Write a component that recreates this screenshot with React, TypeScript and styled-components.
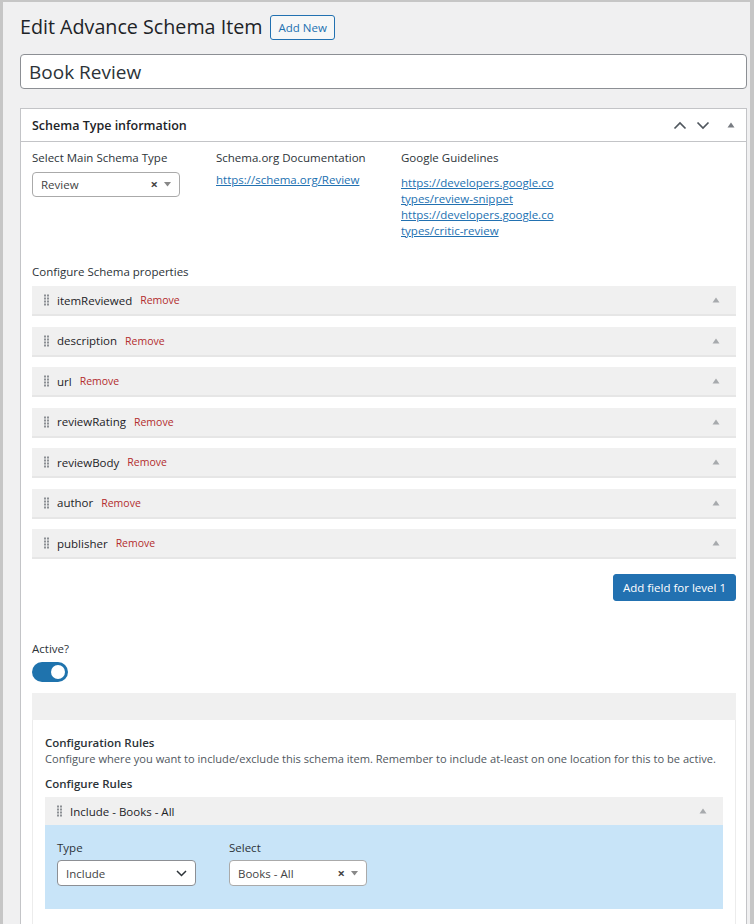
import React from 'react';
import styled, { createGlobalStyle } from 'styled-components';

const GlobalStyle = createGlobalStyle`
    html, body {
        margin: 0;
        padding: 0;
        background: #f0f0f1;
    }
    body {
        font-family: 'Open Sans', 'Noto Sans', Arial, sans-serif;
        color: #1d2327;
    }
    * {
        box-sizing: border-box;
    }
`;

const PROPERTIES = ['itemReviewed', 'description', 'url', 'reviewRating', 'reviewBody', 'author', 'publisher'];

const GOOGLE_LINKS = [
    ['https://developers.google.co', 'types/review-snippet'],
    ['https://developers.google.co', 'types/critic-review'],
];

const DragHandle: React.FC = () => (
    <svg width="5" height="12" viewBox="0 0 5 12">
        {[0, 1, 2, 3].map((row) =>
            [0, 1].map((col) => (
                <rect key={`${row}-${col}`} x={col * 3} y={row * 3 + 0.5} width="2" height="2" fill="#8c8f94" />
            ))
        )}
    </svg>
);

const Triangle: React.FC<{ color?: string; size?: number }> = ({ color = '#a7aaad', size = 8 }) => (
    <svg width={size} height={size * 0.75} viewBox="0 0 8 6">
        <path d="M4 0.5 L7.5 5.5 L0.5 5.5 Z" fill={color} />
    </svg>
);

const Chevron: React.FC<{ down?: boolean }> = ({ down }) => (
    <svg width="14" height="9" viewBox="0 0 14 9">
        <path
            d={down ? 'M1.5 1.5 L7 7 L12.5 1.5' : 'M1.5 7.5 L7 2 L12.5 7.5'}
            fill="none"
            stroke="#50575e"
            strokeWidth="1.7"
        />
    </svg>
);

const SelectArrows: React.FC = () => (
    <ClearArrows>
        <span>×</span>
        <svg width="7" height="5" viewBox="0 0 7 5">
            <path d="M0 0 L7 0 L3.5 4.5 Z" fill="#888" />
        </svg>
    </ClearArrows>
);

const App: React.FC = () => {
    return (
        <>
            <GlobalStyle />
            <Frame>
                <HeadingRow>
                    <Title>Edit Advance Schema Item</Title>
                    <AddNewButton>Add New</AddNewButton>
                </HeadingRow>
                <TitleInput defaultValue="Book Review" />
                <Panel>
                    <PanelHeader>
                        <PanelTitle>Schema Type information</PanelTitle>
                        <HeaderControls>
                            <Chevron />
                            <Chevron down />
                            <TriangleWrap>
                                <Triangle color="#787c82" size={8} />
                            </TriangleWrap>
                        </HeaderControls>
                    </PanelHeader>
                    <PanelBody>
                        <TopColumns>
                            <Column>
                                <FieldLabel>Select Main Schema Type</FieldLabel>
                                <FakeSelect width={148}>
                                    <span>Review</span>
                                    <SelectArrows />
                                </FakeSelect>
                            </Column>
                            <Column>
                                <FieldLabel>Schema.org Documentation</FieldLabel>
                                <DocLink>https://schema.org/Review</DocLink>
                            </Column>
                            <Column>
                                <FieldLabel>Google Guidelines</FieldLabel>
                                <GoogleLinks>
                                    {GOOGLE_LINKS.map(([first, second], i) => (
                                        <GoogleLink key={i}>
                                            {first}
                                            <br />
                                            {second}
                                        </GoogleLink>
                                    ))}
                                </GoogleLinks>
                            </Column>
                        </TopColumns>

                        <SectionLabel>Configure Schema properties</SectionLabel>
                        <PropertyList>
                            {PROPERTIES.map((name) => (
                                <PropertyRow key={name}>
                                    <DragHandle />
                                    <PropertyName>{name}</PropertyName>
                                    <RemoveLink>Remove</RemoveLink>
                                    <RowToggle>
                                        <Triangle />
                                    </RowToggle>
                                </PropertyRow>
                            ))}
                        </PropertyList>

                        <ButtonRow>
                            <PrimaryButton>Add field for level 1</PrimaryButton>
                        </ButtonRow>

                        <ActiveLabel>Active?</ActiveLabel>
                        <Toggle>
                            <Knob />
                        </Toggle>

                        <GrayBar />

                        <ConfigBox>
                            <ConfigTitle>Configuration Rules</ConfigTitle>
                            <ConfigDescription>
                                Configure where you want to include/exclude this schema item. Remember to include
                                at-least on one location for this to be active.
                            </ConfigDescription>
                            <ConfigTitle margin="9px 0 5px 0">Configure Rules</ConfigTitle>
                            <RuleHeader>
                                <DragHandle />
                                <RuleName>Include - Books - All</RuleName>
                                <RowToggle>
                                    <Triangle />
                                </RowToggle>
                            </RuleHeader>
                            <RuleBody>
                                <RuleField>
                                    <RuleLabel>Type</RuleLabel>
                                    <FakeSelect width={139} height={26} bordered>
                                        <span>Include</span>
                                        <svg width="11" height="7" viewBox="0 0 11 7">
                                            <path
                                                d="M1 1 L5.5 5.5 L10 1"
                                                fill="none"
                                                stroke="#2c3338"
                                                strokeWidth="1.5"
                                            />
                                        </svg>
                                    </FakeSelect>
                                </RuleField>
                                <RuleField>
                                    <RuleLabel>Select</RuleLabel>
                                    <FakeSelect width={138} height={26}>
                                        <span>Books - All</span>
                                        <SelectArrows />
                                    </FakeSelect>
                                </RuleField>
                            </RuleBody>
                        </ConfigBox>
                    </PanelBody>
                </Panel>
            </Frame>
        </>
    );
};

const Frame = styled.div`
    min-height: 924px;
    border-top: 2px solid #c6c6c6;
    border-left: 3px solid #c6c6c6;
    border-right: 4px solid #c6c6c6;
    border-bottom: 3px solid #c6c6c6;
    padding: 11px 3px 0 17px;
    display: flex;
    flex-direction: column;
`;

const HeadingRow = styled.div`
    display: flex;
    align-items: center;
    gap: 8px;
    height: 28px;
`;

const Title = styled.h1`
    margin: 0;
    font-size: 19.7px;
    font-weight: 400;
    line-height: 28px;
    color: #1d2327;
`;

const AddNewButton = styled.button`
    height: 25px;
    padding: 0 7px;
    border: 1px solid #2271b1;
    border-radius: 3px;
    background: #f6f7f7;
    color: #2271b1;
    font-family: inherit;
    font-size: 11.5px;
    line-height: 23px;
    margin-top: 1px;
`;

const TitleInput = styled.input`
    margin-top: 13px;
    width: 100%;
    height: 35px;
    border: 1px solid #8c8f94;
    border-radius: 4px;
    padding: 0 8px;
    font-family: inherit;
    font-size: 19px;
    color: #2c3338;
    background: #fff;
    outline: none;
`;

const Panel = styled.div`
    margin-top: 19px;
    flex: 1;
    background: #fff;
    border: 1px solid #c3c4c7;
    border-bottom: none;
`;

const PanelHeader = styled.div`
    height: 33px;
    border-bottom: 1px solid #c3c4c7;
    display: flex;
    align-items: center;
    justify-content: space-between;
    padding: 0 11px 0 11px;
`;

const PanelTitle = styled.h2`
    margin: 0;
    font-size: 12.5px;
    font-weight: 600;
    color: #1d2327;
`;

const HeaderControls = styled.div`
    display: flex;
    align-items: center;
    gap: 9px;
`;

const TriangleWrap = styled.span`
    display: flex;
    margin-left: 8px;
`;

const PanelBody = styled.div`
    padding: 8px 10px 0 11px;
`;

const TopColumns = styled.div`
    display: grid;
    grid-template-columns: 184px 185px 1fr;
`;

const Column = styled.div`
    display: flex;
    flex-direction: column;
`;

const FieldLabel = styled.div`
    font-size: 11.5px;
    line-height: 16px;
    color: #2c3338;
    margin-bottom: 6px;
    font-weight: 500;
`;

const FakeSelect = styled.div<{ width: number; height?: number; bordered?: boolean }>`
    width: ${(props) => props.width}px;
    height: ${(props) => props.height ?? 25}px;
    border: 1px solid ${(props) => (props.bordered ? '#8c8f94' : '#aaa')};
    border-radius: 4px;
    background: #fff;
    display: flex;
    align-items: center;
    justify-content: space-between;
    padding: 0 8px 0 8px;
    font-size: 11.5px;
    color: #444;
`;

const ClearArrows = styled.span`
    display: flex;
    align-items: center;
    gap: 6px;
    font-size: 13px;
    font-weight: 700;
    color: #444;
    line-height: 1;
`;

const DocLink = styled.a`
    font-size: 11.5px;
    line-height: 16px;
    color: #2271b1;
    text-decoration: underline;
`;

const GoogleLinks = styled.div`
    display: flex;
    flex-direction: column;
    margin-top: 3px;
`;

const GoogleLink = styled.a`
    font-size: 11.5px;
    line-height: 16px;
    color: #2271b1;
    text-decoration: underline;
`;

const SectionLabel = styled.div`
    margin-top: 25px;
    font-size: 11.5px;
    line-height: 16px;
    color: #2c3338;
    font-weight: 500;
`;

const PropertyList = styled.div`
    margin-top: 6px;
    display: flex;
    flex-direction: column;
    gap: 10.5px;
`;

const PropertyRow = styled.div`
    height: 30px;
    background: #f0f0f0;
    border-bottom: 2px solid #e6e6e6;
    display: flex;
    align-items: center;
    padding: 0 16px 0 12px;
`;

const PropertyName = styled.span`
    margin-left: 8px;
    font-size: 11.5px;
    color: #1d2327;
`;

const RemoveLink = styled.a`
    margin-left: 8px;
    font-size: 10.5px;
    color: #b32d2e;
`;

const RowToggle = styled.span`
    margin-left: auto;
    display: flex;
`;

const ButtonRow = styled.div`
    display: flex;
    justify-content: flex-end;
    margin-top: 15px;
`;

const PrimaryButton = styled.button`
    height: 27px;
    padding: 0 9px;
    background: #2271b1;
    color: #fff;
    border: 1px solid #2271b1;
    border-radius: 3px;
    font-family: inherit;
    font-size: 11.5px;
`;

const ActiveLabel = styled.div`
    margin-top: 40px;
    font-size: 11.5px;
    line-height: 16px;
    color: #2c3338;
`;

const Toggle = styled.div`
    margin-top: 5px;
    width: 36px;
    height: 20px;
    border-radius: 10px;
    background: #1f73ad;
    position: relative;
`;

const Knob = styled.span`
    position: absolute;
    top: 3px;
    right: 3px;
    width: 14px;
    height: 14px;
    border-radius: 50%;
    background: #fff;
`;

const GrayBar = styled.div`
    margin-top: 11px;
    height: 27px;
    background: #f0f0f0;
`;

const ConfigBox = styled.div`
    border: 1px solid #ececec;
    border-top: none;
    padding: 15px 12px 0 12px;
    min-height: 210px;
`;

const ConfigTitle = styled.div<{ margin?: string }>`
    font-size: 11.5px;
    line-height: 16px;
    font-weight: 600;
    color: #2c3338;
    ${(props) => (props.margin ? `margin: ${props.margin};` : '')}
`;

const ConfigDescription = styled.div`
    font-size: 11.1px;
    line-height: 16px;
    color: #50575e;
`;

const RuleHeader = styled.div`
    height: 28px;
    background: #f0f0f0;
    display: flex;
    align-items: center;
    padding: 0 16px 0 12px;
`;

const RuleName = styled.span`
    margin-left: 8px;
    font-size: 11.5px;
    color: #1d2327;
`;

const RuleBody = styled.div`
    height: 84px;
    background: #c8e4f8;
    padding: 15px 12px 0 12px;
    display: flex;
    gap: 33px;
`;

const RuleField = styled.div`
    display: flex;
    flex-direction: column;
`;

const RuleLabel = styled.div`
    font-size: 11.5px;
    line-height: 16px;
    color: #2c3338;
    margin-bottom: 4px;
`;

export default App;
